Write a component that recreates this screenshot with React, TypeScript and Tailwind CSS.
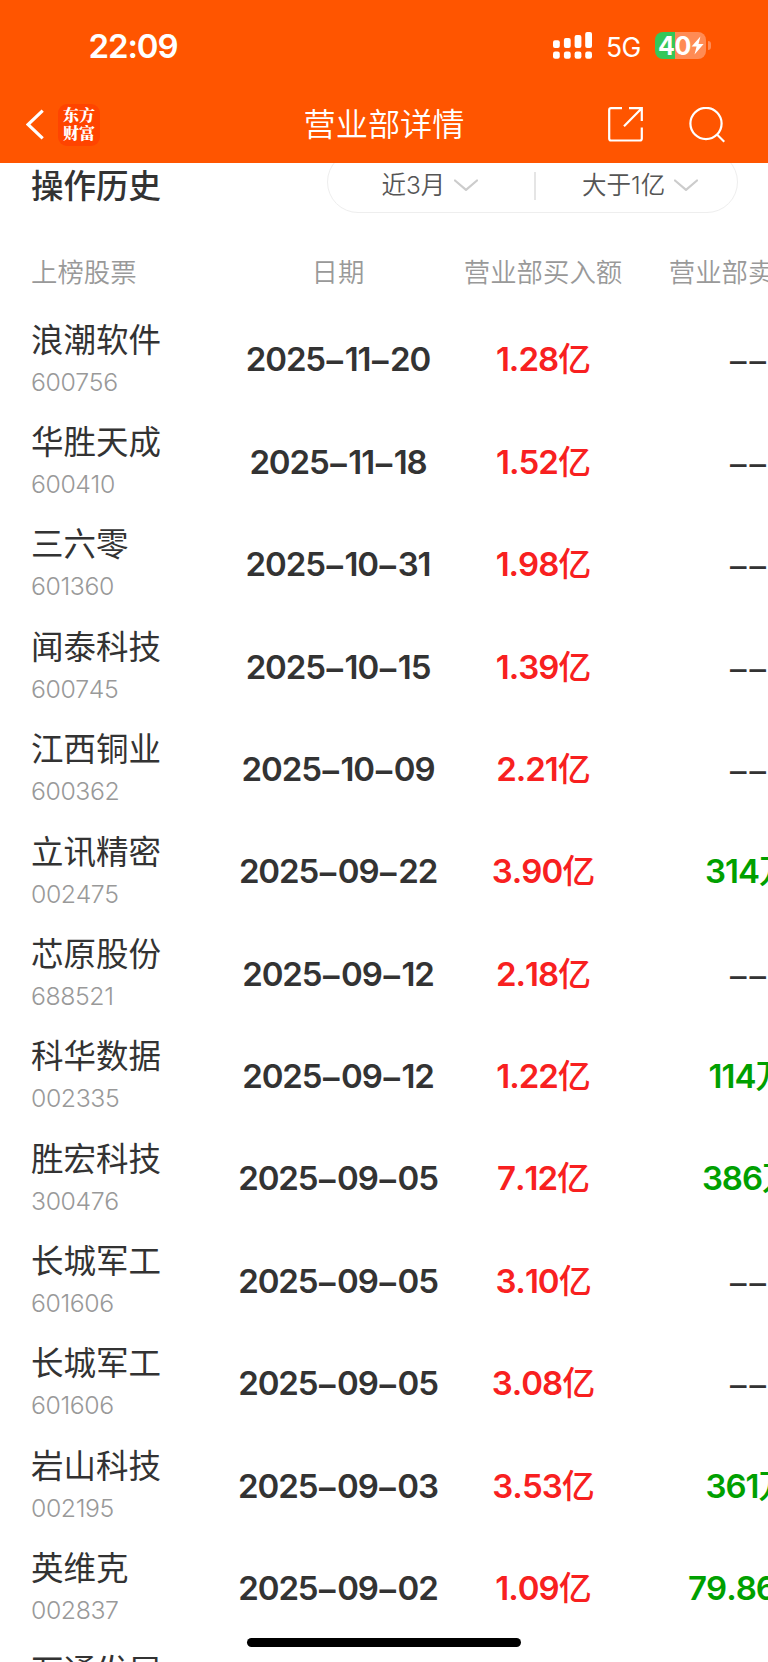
import React from 'react';

interface Trade {
  name: string;
  code: string;
  date: string;
  buy: string;
  sell: string;
}

const trades: Trade[] = [
  { name: '浪潮软件', code: '600756', date: '2025-11-20', buy: '1.28', sell: '' },
  { name: '华胜天成', code: '600410', date: '2025-11-18', buy: '1.52', sell: '' },
  { name: '三六零', code: '601360', date: '2025-10-31', buy: '1.98', sell: '' },
  { name: '闻泰科技', code: '600745', date: '2025-10-15', buy: '1.39', sell: '' },
  { name: '江西铜业', code: '600362', date: '2025-10-09', buy: '2.21', sell: '' },
  { name: '立讯精密', code: '002475', date: '2025-09-22', buy: '3.90', sell: '314' },
  { name: '芯原股份', code: '688521', date: '2025-09-12', buy: '2.18', sell: '' },
  { name: '科华数据', code: '002335', date: '2025-09-12', buy: '1.22', sell: '114' },
  { name: '胜宏科技', code: '300476', date: '2025-09-05', buy: '7.12', sell: '386' },
  { name: '长城军工', code: '601606', date: '2025-09-05', buy: '3.10', sell: '' },
  { name: '长城军工', code: '601606', date: '2025-09-05', buy: '3.08', sell: '' },
  { name: '岩山科技', code: '002195', date: '2025-09-03', buy: '3.53', sell: '361' },
  { name: '英维克', code: '002837', date: '2025-09-02', buy: '1.09', sell: '79.86' },
  { name: '万通发展', code: '600246', date: '2025-09-02', buy: '1.15', sell: '' },
];

const SignalIcon: React.FC = () => (
  <svg className="ml-auto mt-8 h-[27px] w-[39px] shrink-0" viewBox="0 0 39 27" fill="#fff">
    <rect x="0" y="8.2" width="6.8" height="7.8" rx="2" />
    <rect x="10.9" y="6" width="6.8" height="10" rx="2" />
    <rect x="21.6" y="3" width="6.8" height="13" rx="2" />
    <rect x="32.2" y="0" width="6.8" height="16" rx="2" />
    <rect x="0" y="19.6" width="6.8" height="7.2" rx="2.2" />
    <rect x="10.9" y="19.6" width="6.8" height="7.2" rx="2.2" />
    <rect x="21.6" y="19.6" width="6.8" height="7.2" rx="2.2" />
    <rect x="32.2" y="19.6" width="6.8" height="7.2" rx="2.2" />
  </svg>
);

const Battery: React.FC = () => (
  <div className="mt-8 ml-[14px] flex h-[27px] items-center">
    <div className="flex h-[27px] w-[50.5px] items-center rounded-[8px] bg-[linear-gradient(90deg,#34c759_40%,#ff8b54_40%)] pl-[3px]">
      <span className="text-[25px] leading-[30px] font-bold tracking-[-0.3px] text-white">40</span>
      <svg className="h-[19px] w-[13px] shrink-0" viewBox="0 0 13 19" fill="#fff">
        <path d="M9.4 0.4 0.6 10.6H5.6L3.5 18.6 12.6 8H7.5Z" />
      </svg>
    </div>
    <div className="ml-[2px] h-[9px] w-[3px] rounded-r-full bg-[#ff8b54]" />
  </div>
);

const Chevron: React.FC = () => (
  <svg className="h-[13px] w-6 shrink-0" viewBox="0 0 24 13" fill="none">
    <path d="M1 1.5 12 10.8 23 1.5" stroke="#ccc" strokeWidth="2.2" strokeLinecap="round" strokeLinejoin="round" />
  </svg>
);

const Header: React.FC = () => (
  <header className="relative z-10 h-[163px] shrink-0 bg-[#ff5500] text-white">
    <div className="flex h-[86px] items-start">
      <span className="mt-[26px] ml-[88.5px] text-[33px] leading-10 font-semibold tracking-[-1.1px]">22:09</span>
      <SignalIcon />
      <span className="mt-8 ml-[14px] text-[26.5px] leading-[30px] tracking-[-0.4px]">5G</span>
      <div className="mr-[57.5px]">
        <Battery />
      </div>
    </div>
    <div className="grid h-[77px] grid-cols-[1fr_auto_1fr] items-center">
      <div className="flex items-center">
        <svg className="ml-[26px] h-[31px] w-[19px]" viewBox="0 0 19 31" fill="none">
          <path d="M16.7 1.7 2 15.5 16.7 29.3" stroke="#fff" strokeWidth="3.2" />
        </svg>
        <div className="ml-[13px] flex size-[42px] flex-col items-center justify-center rounded-[9px] bg-[#ff4400] pb-px font-['Noto_Serif_CJK_SC','Noto_Sans_CJK_SC',serif] text-[16px] leading-[18px] font-black">
          <span>东方</span>
          <span>财富</span>
        </div>
      </div>
      <h1 className="text-[32.2px] leading-[40px] font-[350]">营业部详情</h1>
      <div className="flex items-center justify-end pr-[43px]">
        <svg className="h-[35px] w-[35px]" viewBox="0 0 35 35" fill="none" stroke="#fff" strokeWidth="2.2">
          <path d="M14 1.2H3Q1.2 1.2 1.2 3V31.5Q1.2 33.5 3 33.5H32Q33.8 33.5 33.8 31.5V20.5" />
          <path d="M21 1.2H33.8V14M33.5 1.5 16 19.2" />
        </svg>
        <svg className="ml-[46px] h-[36px] w-[36px]" viewBox="0 0 36 36" fill="none" stroke="#fff" strokeWidth="2.2">
          <circle cx="17" cy="16.5" r="15.6" />
          <path d="M28 27.5 35.3 34.8" />
        </svg>
      </div>
    </div>
  </header>
);

const DateCell: React.FC<{ date: string }> = ({ date }) => {
  const [year, month, day] = date.split('-');
  return (
    <span className="pt-px text-center text-[33px] font-[560] tracking-[-1.1px]">
      {year}
      <span className="mx-[1.6px] align-[-1px] tracking-normal">–</span>
      {month}
      <span className="mx-[1.6px] align-[-1px] tracking-normal">–</span>
      {day}
    </span>
  );
};

const App: React.FC = () => {
  return (
    <div className="relative flex h-[1662px] w-[768px] flex-col overflow-hidden bg-white font-['Inter','Noto_Sans_CJK_SC',sans-serif] [font-feature-settings:'calt'_0] [font-kerning:none] text-[#333] whitespace-nowrap">
      <Header />

      <div className="-mt-3 flex h-[62px] shrink-0 items-center justify-between pr-[30px] pl-[31px]">
        <h2 className="pt-[9px] text-[32.5px] leading-10 font-medium">操作历史</h2>
        <div className="flex h-[62px] w-[411px] items-center rounded-full border border-[#eee] text-[24.5px] text-[#555]">
          <div className="flex w-[206px] items-center gap-[9px] pt-[7px] pl-[53.5px] font-[350]">
            <span>近3月</span>
            <Chevron />
          </div>
          <div className="mt-[7px] h-7 w-[2px] bg-[#e5e5e5]" />
          <div className="flex flex-1 items-center gap-[9px] pt-[7px] pl-[46px] font-[350]">
            <span>大于1亿</span>
            <Chevron />
          </div>
        </div>
      </div>

      <div className="grid h-[96px] shrink-0 grid-cols-[237px_202px_208px_202px] items-center pt-[21px] text-[26.4px] leading-8 font-[350] text-[#999]">
        <span className="pl-[31px]">上榜股票</span>
        <span className="text-center">日期</span>
        <span className="text-center">营业部买入额</span>
        <span className="text-center">营业部卖出额</span>
      </div>

      {trades.map((trade, i) => (
        <div key={i} className="grid h-[102.38px] shrink-0 grid-cols-[237px_202px_208px_202px] items-center">
          <div className="flex flex-col pl-[31px]">
            <span className="text-[32.5px] leading-[44px] font-[380]">{trade.name}</span>
            <span className="text-[24.8px] leading-[39px] font-[350] tracking-[-0.4px] text-[#999]">{trade.code}</span>
          </div>
          <DateCell date={trade.date} />
          <span className="text-center text-[33px] font-[560] tracking-[-1px] text-[#f82020]">{trade.buy}亿</span>
          {trade.sell ? (
            <span className="text-center text-[33px] font-[560] tracking-[-1px] text-[#00a000]">{trade.sell}万</span>
          ) : (
            <span className="pt-1 pl-[3px] text-center text-[33px] tracking-[3px]">––</span>
          )}
        </div>
      ))}

      <div className="absolute bottom-[15px] left-[247px] h-[9px] w-[274px] rounded-full bg-black" />
    </div>
  );
};

export default App;
